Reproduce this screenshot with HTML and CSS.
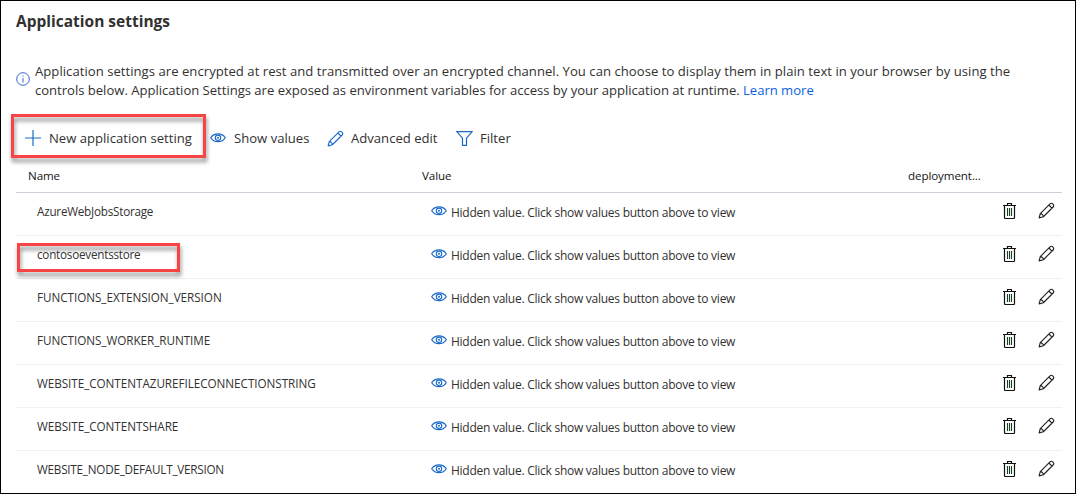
FILE: index.html
```html
<!DOCTYPE html>
<html lang="en">
<head>
<meta charset="utf-8">
<title>Application settings</title>
<link rel="stylesheet" href="styles.css">
</head>
<body>
<svg class="defs" aria-hidden="true">
  <symbol id="eye" viewBox="0 0 16 10"><path d="M.7 4.800C4-.4 12-.4 15.300 4.800 12 10 4 10 .7 4.800Z" fill="none" stroke="currentColor" stroke-width="1.200"/><circle cx="8" cy="4.800" r="2.700" fill="none" stroke="currentColor" stroke-width="1.100"/><circle cx="8" cy="4.800" r="1" fill="currentColor"/></symbol>
  <symbol id="pencil" viewBox="0 0 18 18"><path d="M1.200 16.800 2.400 12.300 12.700 2C14.700.1 17.900 3.200 16 5.300L5.700 15.600ZM11.500 3.200l3.300 3.300M2.400 12.300c1.700 0 3.300 1.500 3.300 3.300" fill="none" stroke="currentColor" stroke-width="1.200" stroke-linejoin="round"/></symbol>
  <symbol id="trash" viewBox="0 0 13 17"><path d="M0 3.500h13M4.500 3.500v-2h4v2M1.500 3.500v12q0 1 1 1h8q1 0 1-1V3.500" fill="none" stroke="currentColor" stroke-width="1.200"/><path d="M4.500 6v8M6.500 6v8M8.500 6v8" stroke="#17401f" stroke-width="1.100"/></symbol>
</svg>
<main class="panel">
  <h1 class="title">Application settings</h1>
  <div class="info">
    <svg class="info-icon" viewBox="0 0 14 14"><circle cx="7" cy="7" r="6.300" fill="none" stroke="currentColor"/><path d="M7 6v4.500M7 3.500v1.200" stroke="currentColor"/></svg>
    <p class="info-text"><span class="line-one">Application settings are encrypted at rest and transmitted over an encrypted channel. You can choose to display them in plain text in your browser by using the</span><br><span class="line-two">controls below. Application Settings are exposed as environment variables for access by your application at runtime. <a class="link">Learn more</a></span></p>
  </div>
  <div class="toolbar">
    <div class="command command-new"><svg class="plus" viewBox="0 0 16 16"><path d="M8 0v16M0 8h16" stroke="currentColor" stroke-width="1.200"/></svg><span>New application setting</span></div>
    <div class="command command-show"><svg class="eye"><use href="#eye"/></svg><span>Show values</span></div>
    <div class="command command-edit"><svg class="pencil"><use href="#pencil"/></svg><span>Advanced edit</span></div>
    <div class="command command-filter"><svg class="funnel" viewBox="0 0 17 15"><path d="M.8.6h15.400L10.500 7.200v7.200h-4V7.200Z" fill="none" stroke="currentColor" stroke-width="1.200"/></svg><span>Filter</span></div>
  </div>
  <div class="table">
    <div class="head"><span>Name</span><span>Value</span><span>deployment...</span></div>
    <div class="row"><span class="name tight">AzureWebJobsStorage</span><svg class="eye"><use href="#eye"/></svg><span class="value">Hidden value. Click show values button above to view</span><svg class="trash"><use href="#trash"/></svg><svg class="pencil"><use href="#pencil"/></svg></div>
    <div class="row marked"><span class="name tight">contosoeventsstore</span><svg class="eye"><use href="#eye"/></svg><span class="value">Hidden value. Click show values button above to view</span><svg class="trash"><use href="#trash"/></svg><svg class="pencil"><use href="#pencil"/></svg></div>
    <div class="row"><span class="name">FUNCTIONS_EXTENSION_VERSION</span><svg class="eye"><use href="#eye"/></svg><span class="value">Hidden value. Click show values button above to view</span><svg class="trash"><use href="#trash"/></svg><svg class="pencil"><use href="#pencil"/></svg></div>
    <div class="row"><span class="name">FUNCTIONS_WORKER_RUNTIME</span><svg class="eye"><use href="#eye"/></svg><span class="value">Hidden value. Click show values button above to view</span><svg class="trash"><use href="#trash"/></svg><svg class="pencil"><use href="#pencil"/></svg></div>
    <div class="row"><span class="name">WEBSITE_CONTENTAZUREFILECONNECTIONSTRING</span><svg class="eye"><use href="#eye"/></svg><span class="value">Hidden value. Click show values button above to view</span><svg class="trash"><use href="#trash"/></svg><svg class="pencil"><use href="#pencil"/></svg></div>
    <div class="row"><span class="name">WEBSITE_CONTENTSHARE</span><svg class="eye"><use href="#eye"/></svg><span class="value">Hidden value. Click show values button above to view</span><svg class="trash"><use href="#trash"/></svg><svg class="pencil"><use href="#pencil"/></svg></div>
    <div class="row"><span class="name tight">WEBSITE_NODE_DEFAULT_VERSION</span><svg class="eye"><use href="#eye"/></svg><span class="value">Hidden value. Click show values button above to view</span><svg class="trash"><use href="#trash"/></svg><svg class="pencil"><use href="#pencil"/></svg></div>
  </div>
</main>
</body>
</html>
```
FILE: styles.css
```css
*, *::after { box-sizing: border-box; }
body { margin: 0; background: #fff; color: #323130; font-family: "Open Sans", "Noto Sans", sans-serif; }
svg { display: block; }
.defs { display: none; }
.panel { width: 1076px; height: 494px; border: 1px solid #000; padding: 0 13px 0 15px; overflow: hidden; }
.title { margin: 0; padding-top: 9px; height: 61px; font-size: 15.5px; line-height: 22px; font-weight: 700; white-space: nowrap; }
.info { display: flex; height: 52px; gap: 5px; }
.info-icon { width: 14px; height: 14px; margin-top: 10px; color: #3b62d8; flex: none; }
.info-text { margin: 0; font-size: 13.1px; line-height: 19px; white-space: nowrap; }
.line-one { letter-spacing: .034px; }
.line-two { letter-spacing: -.024px; }
.link { color: #0b62dc; }
.toolbar { display: flex; height: 44px; margin-left: -5px; font-size: 13.1px; color: #323130; white-space: nowrap; }
.command { display: flex; align-items: center; height: 44px; padding-top: 4px; }
.command svg { flex: none; color: #1b6ac9; }
.command-new { position: relative; width: 196px; padding-left: 14px; gap: 8px; }
.command-new::after, .marked::after { content: ""; position: absolute; border: 3px solid #fa4444; filter: drop-shadow(1px 4px 2px rgba(0, 0, 0, .45)); }
.command-new::after { left: 0; top: 0; width: 195px; height: 44px; }
.command-show { width: 120px; padding-left: 3px; gap: 8px; }
.command-edit { width: 129px; gap: 7px; }
.command-filter { gap: 7px; }
.plus { width: 16px; height: 16px; }
.eye { width: 16px; height: 10px; color: #1b6ac9; }
.pencil { width: 17px; height: 17px; }
.funnel { width: 17px; height: 15px; }
.table { width: 1046px; }
.head { display: grid; grid-template-columns: 394px 486px auto; height: 35px; padding-left: 12px; border-bottom: 1px solid #c9d0da; font-size: 11.6px; line-height: 36px; letter-spacing: -.1px; color: #161514; }
.row { position: relative; display: grid; grid-template-columns: 394px 20px 552px 35px 18px; align-items: start; height: 43px; padding: 9px 0 0 21px; border-bottom: 1px solid #f1f1f1; font-size: 11.7px; line-height: 17px; letter-spacing: -.04px; white-space: nowrap; }
.row:last-child { border-bottom: 0; }
.name { padding-top: 1px; }
.name.tight { letter-spacing: -.23px; }
.value { padding-top: 2px; font-size: 12px; letter-spacing: -.26px; }
.row .eye { margin-top: 4px; }
.row .trash { width: 13px; height: 17px; color: #111; }
.row .pencil { color: #222; }
.marked::after { left: 1px; top: 7px; width: 163px; height: 29px; }
```
